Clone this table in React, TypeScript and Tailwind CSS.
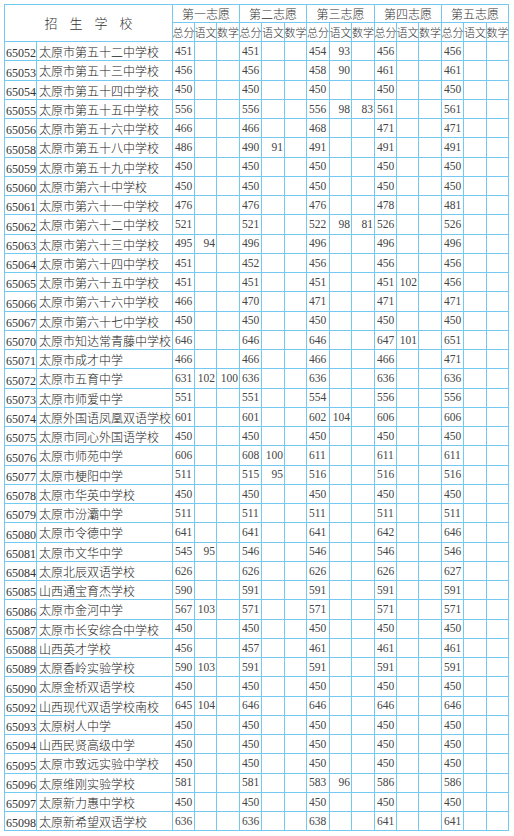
type Row = [string, string, ...string[]];

// code, school, then 5 groups x (总分, 语文, 数学)
const ROWS: Row[] = [
  ["65052", "太原市第五十二中学校", "451", "", "", "451", "", "", "454", "93", "", "456", "", "", "456", "", ""],
  ["65053", "太原市第五十三中学校", "456", "", "", "456", "", "", "458", "90", "", "461", "", "", "461", "", ""],
  ["65054", "太原市第五十四中学校", "450", "", "", "450", "", "", "450", "", "", "450", "", "", "450", "", ""],
  ["65055", "太原市第五十五中学校", "556", "", "", "556", "", "", "556", "98", "83", "561", "", "", "561", "", ""],
  ["65056", "太原市第五十六中学校", "466", "", "", "466", "", "", "468", "", "", "471", "", "", "471", "", ""],
  ["65058", "太原市第五十八中学校", "486", "", "", "490", "91", "", "491", "", "", "491", "", "", "491", "", ""],
  ["65059", "太原市第五十九中学校", "450", "", "", "450", "", "", "450", "", "", "450", "", "", "450", "", ""],
  ["65060", "太原市第六十中学校", "450", "", "", "450", "", "", "450", "", "", "450", "", "", "450", "", ""],
  ["65061", "太原市第六十一中学校", "476", "", "", "476", "", "", "476", "", "", "478", "", "", "481", "", ""],
  ["65062", "太原市第六十二中学校", "521", "", "", "521", "", "", "522", "98", "81", "526", "", "", "526", "", ""],
  ["65063", "太原市第六十三中学校", "495", "94", "", "496", "", "", "496", "", "", "496", "", "", "496", "", ""],
  ["65064", "太原市第六十四中学校", "451", "", "", "452", "", "", "456", "", "", "456", "", "", "456", "", ""],
  ["65065", "太原市第六十五中学校", "451", "", "", "451", "", "", "451", "", "", "451", "102", "", "456", "", ""],
  ["65066", "太原市第六十六中学校", "466", "", "", "470", "", "", "471", "", "", "471", "", "", "471", "", ""],
  ["65067", "太原市第六十七中学校", "450", "", "", "450", "", "", "450", "", "", "450", "", "", "450", "", ""],
  ["65070", "太原市知达常青藤中学校", "646", "", "", "646", "", "", "646", "", "", "647", "101", "", "651", "", ""],
  ["65071", "太原市成才中学", "466", "", "", "466", "", "", "466", "", "", "466", "", "", "471", "", ""],
  ["65072", "太原市五育中学", "631", "102", "100", "636", "", "", "636", "", "", "636", "", "", "636", "", ""],
  ["65073", "太原市师爱中学", "551", "", "", "551", "", "", "554", "", "", "556", "", "", "556", "", ""],
  ["65074", "太原外国语凤凰双语学校", "601", "", "", "601", "", "", "602", "104", "", "606", "", "", "606", "", ""],
  ["65075", "太原市同心外国语学校", "450", "", "", "450", "", "", "450", "", "", "450", "", "", "450", "", ""],
  ["65076", "太原市师苑中学", "606", "", "", "608", "100", "", "611", "", "", "611", "", "", "611", "", ""],
  ["65077", "太原市梗阳中学", "511", "", "", "515", "95", "", "516", "", "", "516", "", "", "516", "", ""],
  ["65078", "太原市华英中学校", "450", "", "", "450", "", "", "450", "", "", "450", "", "", "450", "", ""],
  ["65079", "太原市汾灞中学", "511", "", "", "511", "", "", "511", "", "", "511", "", "", "511", "", ""],
  ["65080", "太原市令德中学", "641", "", "", "641", "", "", "641", "", "", "642", "", "", "646", "", ""],
  ["65081", "太原市文华中学", "545", "95", "", "546", "", "", "546", "", "", "546", "", "", "546", "", ""],
  ["65084", "太原北辰双语学校", "626", "", "", "626", "", "", "626", "", "", "626", "", "", "627", "", ""],
  ["65085", "山西通宝育杰学校", "590", "", "", "591", "", "", "591", "", "", "591", "", "", "591", "", ""],
  ["65086", "太原市金河中学", "567", "103", "", "571", "", "", "571", "", "", "571", "", "", "571", "", ""],
  ["65087", "太原市长安综合中学校", "450", "", "", "450", "", "", "450", "", "", "450", "", "", "450", "", ""],
  ["65088", "山西英才学校", "456", "", "", "457", "", "", "461", "", "", "461", "", "", "461", "", ""],
  ["65089", "太原香岭实验学校", "590", "103", "", "591", "", "", "591", "", "", "591", "", "", "591", "", ""],
  ["65090", "太原金桥双语学校", "450", "", "", "450", "", "", "450", "", "", "450", "", "", "450", "", ""],
  ["65092", "山西现代双语学校南校", "645", "104", "", "646", "", "", "646", "", "", "646", "", "", "646", "", ""],
  ["65093", "太原树人中学", "450", "", "", "450", "", "", "450", "", "", "450", "", "", "450", "", ""],
  ["65094", "山西民贤高级中学", "450", "", "", "450", "", "", "450", "", "", "450", "", "", "450", "", ""],
  ["65095", "太原市致远实验中学校", "450", "", "", "450", "", "", "450", "", "", "450", "", "", "450", "", ""],
  ["65096", "太原维刚实验学校", "581", "", "", "581", "", "", "583", "96", "", "586", "", "", "586", "", ""],
  ["65097", "太原新力惠中学校", "450", "", "", "450", "", "", "450", "", "", "450", "", "", "450", "", ""],
  ["65098", "太原新希望双语学校", "636", "", "", "636", "", "", "638", "", "", "641", "", "", "641", "", ""],
];

const GROUPS = ["第一志愿", "第二志愿", "第三志愿", "第四志愿", "第五志愿"];
const SUBS = ["总分", "语文", "数学"];

const cjk = "font-['Noto_Sans_CJK_SC',sans-serif] font-light";
const num = "font-['Liberation_Serif','DejaVu_Serif',serif]";

export default function App() {
  return (
    <div className="min-h-[836px] w-[514px] bg-white pl-[4px] pt-[4px]">
      <div className="grid w-max grid-cols-[31px_135px_21px_21px_22px_21px_22px_21px_22px_21px_22px_21px_21px_22px_21px_22px_21px] grid-rows-[17px_18px_repeat(41,18.25px)] gap-px bg-[#74c9f1] p-px">
        {/* header */}
        <div
          className={`col-span-2 row-span-2 flex items-center justify-center bg-white text-[13px] tracking-[12px] text-[#333] ${cjk}`}
        >
          <span className="pl-[12px]">招生学校</span>
        </div>
        {GROUPS.map((g) => (
          <div
            key={g}
            className={`col-span-3 flex items-center justify-center bg-white text-[12px] leading-none text-[#333] ${cjk}`}
          >
            {g}
          </div>
        ))}
        {GROUPS.map((g) =>
          SUBS.map((s) => (
            <div
              key={g + s}
              className={`flex items-center justify-center overflow-visible whitespace-nowrap bg-white text-[11px] leading-none text-[#333] ${cjk}`}
            >
              {s}
            </div>
          ))
        )}

        {/* data rows */}
        {ROWS.map(([code, name, ...scores]) => (
          <div key={code} className="contents">
            <div
              className={`flex items-end whitespace-nowrap bg-white pb-[1px] pl-px text-[12px] leading-none text-[#333] ${num}`}
            >
              {code}
            </div>
            <div
              className={`flex items-center whitespace-nowrap bg-white pl-[2px] pt-[2px] text-[12px] leading-none text-[#222] ${cjk}`}
            >
              {name}
            </div>
            {scores.map((v, i) => (
              <div
                key={i}
                className={`flex items-center whitespace-nowrap bg-white pt-[1px] text-[11.5px] leading-none text-[#444] ${num} ${
                  i % 3 === 0 ? "justify-start pl-[2px]" : "justify-end pr-[1px]"
                }`}
              >
                {v}
              </div>
            ))}
          </div>
        ))}
      </div>
    </div>
  );
}
